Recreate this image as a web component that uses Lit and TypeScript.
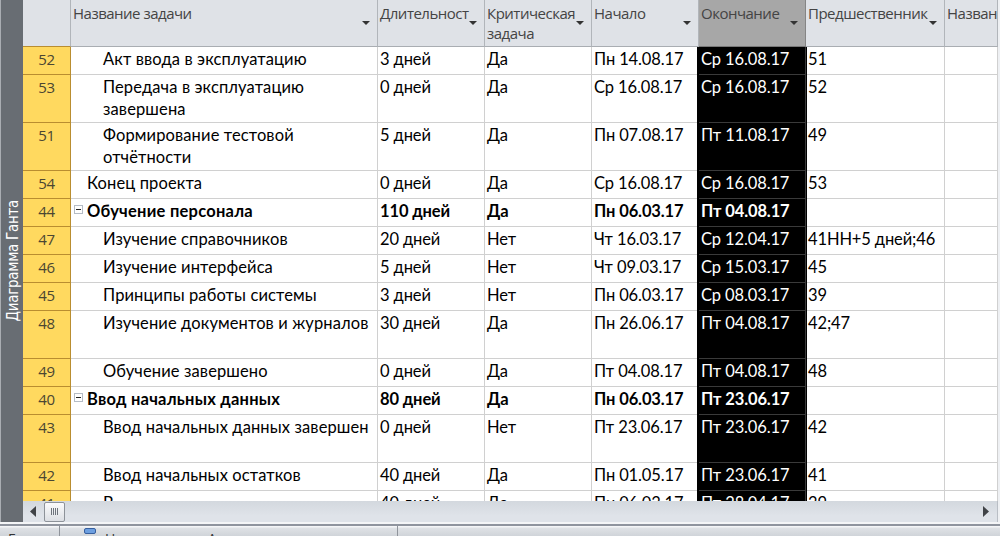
import { LitElement, html, css, svg, nothing } from "lit";
import { customElement } from "lit/decorators.js";
import { classMap } from "lit/directives/class-map.js";

interface Task {
  id: string;
  name: string;
  level: number;
  duration: string;
  critical: string;
  start: string;
  finish: string;
  pred: string;
  tall?: boolean;
  summary?: boolean;
}

const t = (
  id: string, name: string, level: number, duration: string, critical: string,
  start: string, finish: string, pred: string, extra: Partial<Task> = {},
): Task => ({ id, name, level, duration, critical, start, finish, pred, ...extra });

const TASKS: Task[] = [
  t("52", "Акт ввода в эксплуатацию", 2, "3 дней", "Да", "Пн 14.08.17", "Ср 16.08.17", "51"),
  t("53", "Передача в эксплуатацию\nзавершена", 2, "0 дней", "Да", "Ср 16.08.17", "Ср 16.08.17", "52", { tall: true }),
  t("51", "Формирование тестовой\nотчётности", 2, "5 дней", "Да", "Пн 07.08.17", "Пт 11.08.17", "49", { tall: true }),
  t("54", "Конец проекта", 1, "0 дней", "Да", "Ср 16.08.17", "Ср 16.08.17", "53"),
  t("44", "Обучение персонала", 1, "110 дней", "Да", "Пн 06.03.17", "Пт 04.08.17", "", { summary: true }),
  t("47", "Изучение справочников", 2, "20 дней", "Нет", "Чт 16.03.17", "Ср 12.04.17", "41НН+5 дней;46"),
  t("46", "Изучение интерфейса", 2, "5 дней", "Нет", "Чт 09.03.17", "Ср 15.03.17", "45"),
  t("45", "Принципы работы системы", 2, "3 дней", "Нет", "Пн 06.03.17", "Ср 08.03.17", "39"),
  t("48", "Изучение документов и журналов", 2, "30 дней", "Да", "Пн 26.06.17", "Пт 04.08.17", "42;47", { tall: true }),
  t("49", "Обучение завершено", 2, "0 дней", "Да", "Пт 04.08.17", "Пт 04.08.17", "48"),
  t("40", "Ввод начальных данных", 1, "80 дней", "Да", "Пн 06.03.17", "Пт 23.06.17", "", { summary: true }),
  t("43", "Ввод начальных данных завершен", 2, "0 дней", "Нет", "Пт 23.06.17", "Пт 23.06.17", "42", { tall: true }),
  t("42", "Ввод начальных остатков", 2, "40 дней", "Да", "Пн 01.05.17", "Пт 23.06.17", "41"),
  t("41", "В", 2, "40 дней", "Да", "Пн 06.03.17", "Пт 28.04.17", "39"),
];

const COLUMNS = [
  { label: "Название задачи", menu: true },
  { label: "Длительност", menu: true },
  { label: "Критическая\nзадача", menu: true },
  { label: "Начало", menu: true },
  { label: "Окончание", menu: true, selected: true },
  { label: "Предшественник", menu: true },
  { label: "Назван", menu: false },
];

@customElement("app-root")
export class AppRoot extends LitElement {
  static styles = css`
    :host {
      display: flex;
      flex-direction: column;
      width: 1000px;
      height: 536px;
      overflow: hidden;
      background: #eef0f3;
      color: #000;
      font: 16.5px/20px Lato, "Open Sans", sans-serif;
    }
    * { box-sizing: border-box; }
    .view {
      display: flex;
      height: 522px;
      border-left: 1px solid #a9adb2;
    }
    .side {
      width: 22px;
      flex: none;
      display: flex;
      align-items: center;
      justify-content: center;
      padding-left: 2px;
      background: #686d73;
    }
    .side-label {
      writing-mode: vertical-rl;
      transform: rotate(180deg);
      font: 15px/20px "DejaVu Sans Condensed", "DejaVu Sans", sans-serif;
      letter-spacing: -0.3px;
      color: #fff;
      white-space: nowrap;
    }
    .sheet { width: 975px; flex: none; display: flex; flex-direction: column; }
    .row {
      display: grid;
      grid-template-columns: 48px 307px 107px 107px 107px 107px 139px 53px;
      height: 28px;
      flex: none;
    }
    .row.tall { height: 48px; }
    .rows { height: 454px; overflow: hidden; display: flex; flex-direction: column; background: #fff; }
    .header { height: 47px; font: 15px/20px "Open Sans", sans-serif; letter-spacing: -0.5px; color: #444; }
    .head {
      display: flex;
      min-width: 0;
      padding: 3px 0 0 2px;
      white-space: pre;
      overflow: hidden;
      position: relative;
      background: #dfe2e7;
      border-right: 1px solid #b1b5ba;
      border-bottom: 1px solid #a9adb2;
    }
    .head.selected { background: #a7a7a7; border-right-color: #858585; border-bottom-color: #777; }
    .arrow { position: absolute; right: 7px; top: 21px; }
    .cell {
      min-width: 0;
      padding: 1px 0 0 2px;
      white-space: pre;
      line-height: 22px;
      letter-spacing: -0.12px;
      border-right: 1px solid #d0d0d0;
      border-bottom: 1px solid #d0d0d0;
    }
    .id {
      padding: 2px 0 0;
      text-align: center;
      background: #ffd95f;
      color: #4b4632;
      font: 15px/20px "Open Sans", sans-serif;
      letter-spacing: -0.4px;
      border-color: #b98d30;
    }
    .header .blank { border-bottom-color: #b98d30; }
    .name { display: flex; letter-spacing: 0.12px; }
    .name.l1 { padding-left: 16px; }
    .name.l2 { padding-left: 32px; }
    .name.summary { padding-left: 3px; letter-spacing: 0.24px; }
    .toggle { width: 9px; height: 9px; margin: 5px 4px 0 0; flex: none; }
    .bold { font-weight: 700; }
    .bold .id { font-weight: 400; }
    .finish {
      position: relative;
      background: #000;
      color: #fff;
      border-color: #3a3a3a;
      padding-left: 2px;
      box-shadow: -2px 0 #000, 1px 0 #000;
    }
    .scroll {
      height: 21px;
      flex: none;
      display: flex;
      align-items: center;
      background: linear-gradient(#d3d8de, #dfe3e9 70%);
      border-right: 1px solid #b9bec5;
      padding: 0 8px 0 7px;
    }
    .thumb {
      width: 21px;
      height: 20px;
      margin-left: 8px;
      display: flex;
      align-items: center;
      justify-content: center;
      gap: 1px;
      border: 1px solid #8d9299;
      border-radius: 2px;
      background: linear-gradient(#fbfbfc, #dcdfe4);
    }
    .grip { width: 1px; height: 7px; background: #6e747c; }
    .spacer { flex: 1; }
    .status {
      height: 14px;
      flex: none;
      border-top: 2px solid #f4f5f7;
      overflow: hidden;
    }
    .bar {
      display: flex;
      height: 12px;
      border-top: 2px solid #8f949e;
      background: linear-gradient(#f4f5f7 1px, #dfe2e6 2px, #d0d4d9);
      font: 14px/20px "Open Sans", sans-serif;
      color: #333;
      white-space: pre;
      overflow: hidden;
    }
    .ready { width: 60px; height: 20px; padding: 3px 0 0 8px; border-right: 1px solid #8f949b; flex: none; }
    .mode { width: 338px; height: 20px; display: flex; padding-left: 24px; border-right: 1px solid #8f949b; flex: none; }
    .mode-label { padding: 3px 0 0 9px; letter-spacing: -0.1px; }
  `;

  private arrow() {
    return html`<svg class="arrow" width="8" height="4" viewBox="0 0 8 4">${svg`<path d="M0 0h8L4 4z" fill="#333"/>`}</svg>`;
  }

  private task(k: Task) {
    return html`<div class=${classMap({ row: true, tall: !!k.tall, bold: !!k.summary })}>
      <div class="cell id">${k.id}</div>
      <div class=${classMap({ cell: true, name: true, l1: k.level === 1, l2: k.level === 2, summary: !!k.summary })}>${k.summary
        ? html`<svg class="toggle" viewBox="0 0 9 9"><rect x=".5" y=".5" width="8" height="8" fill="#fff" stroke="#b5bcc6"/><path d="M2 4.5h5" stroke="#222"/></svg>`
        : nothing}<span>${k.name}</span></div>
      <div class="cell">${k.duration}</div>
      <div class="cell">${k.critical}</div>
      <div class="cell">${k.start}</div>
      <div class="cell finish">${k.finish}</div>
      <div class="cell">${k.pred}</div>
      <div class="cell"></div>
    </div>`;
  }

  render() {
    return html`
      <div class="view">
        <div class="side"><span class="side-label">Диаграмма Ганта</span></div>
        <div class="sheet">
          <div class="row header">
            <div class="head blank"></div>
            ${COLUMNS.map((c) => html`<div class=${classMap({ head: true, selected: !!c.selected })}><span>${c.label}</span>${c.menu ? this.arrow() : nothing}</div>`)}
          </div>
          <div class="rows">${TASKS.map((k) => this.task(k))}</div>
          <div class="scroll">
            <svg width="6" height="11" viewBox="0 0 6 11"><path d="M6 0v11L0 5.5z" fill="#404347"/></svg>
            <div class="thumb">${[0, 1, 2, 3].map(() => html`<i class="grip"></i>`)}</div>
            <div class="spacer"></div>
            <svg width="6" height="11" viewBox="0 0 6 11"><path d="M0 0v11l6-5.5z" fill="#404347"/></svg>
          </div>
        </div>
      </div>
      <div class="status">
        <div class="bar">
          <div class="ready">Готово</div>
          <div class="mode">
            <svg width="12" height="10" viewBox="0 0 12 10"><rect x=".5" y="2.5" width="11" height="5" rx="1.5" fill="#6d9fe0" stroke="#365f9e"/></svg>
            <span class="mode-label">Новые задачи: Автоматическое</span>
          </div>
        </div>
      </div>`;
  }
}
